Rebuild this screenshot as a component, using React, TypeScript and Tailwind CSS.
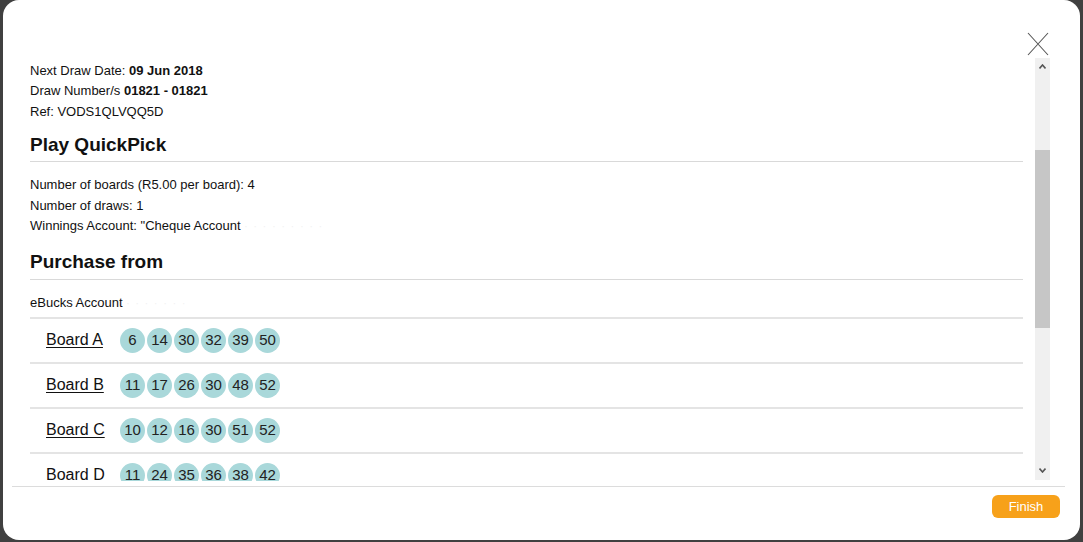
import React from 'react';

type Board = { name: string; nums: number[] };

const boards: Board[] = [
  { name: 'Board A', nums: [6, 14, 30, 32, 39, 50] },
  { name: 'Board B', nums: [11, 17, 26, 30, 48, 52] },
  { name: 'Board C', nums: [10, 12, 16, 30, 51, 52] },
  { name: 'Board D', nums: [11, 24, 35, 36, 38, 42] },
];

const font = { fontFamily: '"Liberation Sans", Arial, sans-serif' };

const Ball = ({ n }: { n: number }) => (
  <div className="w-[25px] h-[25px] rounded-full bg-[#a9d8da] flex items-center justify-center text-[15px] text-[#222]">
    {n}
  </div>
);

const BoardRow = ({ board }: { board: Board }) => (
  <div className="h-[45px] shrink-0 flex items-center border-b-2 border-[#e4e4e4] pl-4">
    <a href="#" className="w-[74px] text-[16px] text-[#111] underline underline-offset-2">
      {board.name}
    </a>
    <div className="flex gap-[2px]">
      {board.nums.map((n, i) => (
        <Ball key={i} n={n} />
      ))}
    </div>
  </div>
);

// fake scrollbar, drawn to match the screenshot
const ScrollBar = () => (
  <div className="w-[15px] h-[422px] bg-[#f0f0f0] relative shrink-0">
    <svg className="absolute left-[4px] top-[6px]" width="7" height="5" viewBox="0 0 7 5">
      <path d="M0.5 4.5 L3.5 1 L6.5 4.5" fill="none" stroke="#555" strokeWidth="1.6" />
    </svg>
    <div className="absolute left-0 top-[92px] w-[15px] h-[178px] bg-[#c6c6c6]" />
    <svg className="absolute left-[4px] bottom-[7px]" width="7" height="5" viewBox="0 0 7 5">
      <path d="M0.5 0.5 L3.5 4 L6.5 0.5" fill="none" stroke="#555" strokeWidth="1.6" />
    </svg>
  </div>
);

export default function App() {
  return (
    <div className="w-[1083px] h-[542px] bg-[#404040] overflow-hidden" style={font}>
      <div className="ml-[3px] w-[1077px] h-[540px] bg-white rounded-[16px] flex flex-col relative">
        {/* close */}
        <button className="absolute top-[32px] left-[1024px] w-[22px] h-[24px]" aria-label="Close">
          <svg width="22" height="24" viewBox="0 0 22 24">
            <path d="M1 1 L21 23 M21 1 L1 23" stroke="#555" strokeWidth="1.1" fill="none" />
          </svg>
        </button>

        <div className="h-[58px] shrink-0" />

        <div className="ml-[9px] w-[1038px] h-[423px] flex shrink-0">
          <div className="flex-1 overflow-hidden pl-[18px] pr-[12px] text-[13px] text-[#111] flex flex-col">
            <div className="pt-[3px] leading-[20px]">
              <div>
                Next Draw Date: <b>09 Jun 2018</b>
              </div>
              <div>
                Draw Number/s <b>01821 - 01821</b>
              </div>
              <div className="leading-[21px]">Ref: VODS1QLVQQ5D</div>
            </div>

            <h2 className="mt-[12px] pb-[5px] border-b border-[#d9d9d9] text-[19px] font-bold leading-[22px]">
              Play QuickPick
            </h2>
            <div className="mt-[13px] leading-[20.5px]">
              <div>Number of boards (R5.00 per board): 4</div>
              <div>Number of draws: 1</div>
              <div>
                Winnings Account: "Cheque Account{' '}
                <span className="text-[#f1f1f1] text-[10px] tracking-[6px]">·········</span>
              </div>
            </div>

            <h2 className="mt-[13px] pb-[6px] border-b border-[#d9d9d9] text-[19px] font-bold leading-[22px]">
              Purchase from
            </h2>
            <div className="mt-[13px] pb-[3px] border-b-2 border-[#e4e4e4] leading-[20px]">
              eBucks Account{' '}
              <span className="text-[#f1f1f1] text-[10px] tracking-[6px]">·······</span>
            </div>

            {boards.map((b) => (
              <BoardRow key={b.name} board={b} />
            ))}
          </div>
          <ScrollBar />
        </div>

        <div className="ml-[9px] mr-[15px] mt-[5px] border-t border-[#dcdcdc] flex justify-end pt-[8px] pr-[5px]">
          <button className="w-[68px] h-[23px] rounded-[6px] bg-[#f7a11a] text-white text-[13px] leading-[23px]">
            Finish
          </button>
        </div>
      </div>
    </div>
  );
}
